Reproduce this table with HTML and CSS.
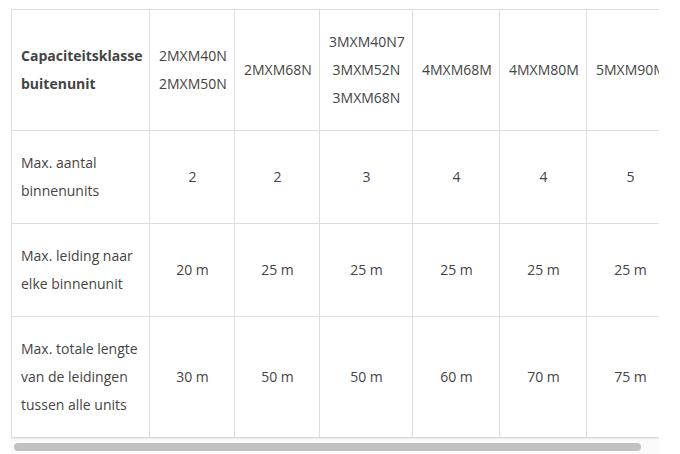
FILE: index.html
```html
<!DOCTYPE html>
<html lang="nl">
<head>
<meta charset="utf-8">
<link rel="stylesheet" href="styles.css">
</head>
<body>
<div class="wrap">
  <div class="scroller">
    <table class="spec">
      <colgroup>
        <col class="c-label"><col class="c-85"><col class="c-85"><col class="c-93"><col class="c-87"><col class="c-87"><col class="c-87">
      </colgroup>
      <tr>
        <td class="label"><strong>Capaciteitsklasse buitenunit</strong></td>
        <td>2MXM40N<br>2MXM50N</td>
        <td>2MXM68N</td>
        <td>3MXM40N7<br>3MXM52N<br>3MXM68N</td>
        <td>4MXM68M</td>
        <td>4MXM80M</td>
        <td>5MXM90M</td>
      </tr>
      <tr>
        <td class="label">Max. aantal binnenunits</td>
        <td>2</td><td>2</td><td>3</td><td>4</td><td>4</td><td>5</td>
      </tr>
      <tr>
        <td class="label">Max. leiding naar elke binnenunit</td>
        <td>20 m</td><td>25 m</td><td>25 m</td><td>25 m</td><td>25 m</td><td>25 m</td>
      </tr>
      <tr>
        <td class="label">Max. totale lengte van de leidingen tussen alle units</td>
        <td>30 m</td><td>50 m</td><td>50 m</td><td>60 m</td><td>70 m</td><td>75 m</td>
      </tr>
    </table>
  </div>
  <div class="scrollbar"><div class="thumb"></div></div>
</div>
</body>
</html>
```
FILE: styles.css
```css
html, body {
  margin: 0;
  padding: 0;
  background: #fff;
}
body {
  font-family: "Open Sans", "Liberation Sans", sans-serif;
  font-size: 14px;
  color: #444;
}
.wrap {
  margin: 9px 0 0 11px;
  width: 648px;
}
.scroller {
  overflow: hidden;
  width: 648px;
}
.spec {
  border-collapse: collapse;
  table-layout: fixed;
  width: 662px;
}
.c-label { width: 138px; }
.c-85 { width: 85px; }
.c-93 { width: 93px; }
.c-87 { width: 87px; }
.spec td {
  border: 1px solid #ddd;
  padding: 18px 8px 18px 9px;
  line-height: 28px;
  text-align: center;
  vertical-align: middle;
  white-space: nowrap;
}
.spec td.label {
  text-align: left;
  white-space: normal;
}
.spec strong {
  font-weight: 700;
}
.scrollbar {
  height: 15px;
  background: #fafafa;
  border-top: 1px solid #e8e8e8;
  display: flex;
  align-items: center;
  padding: 0 3px;
}
.thumb {
  width: 627px;
  height: 8px;
  border-radius: 4px;
  background: #c1c1c1;
}
```
